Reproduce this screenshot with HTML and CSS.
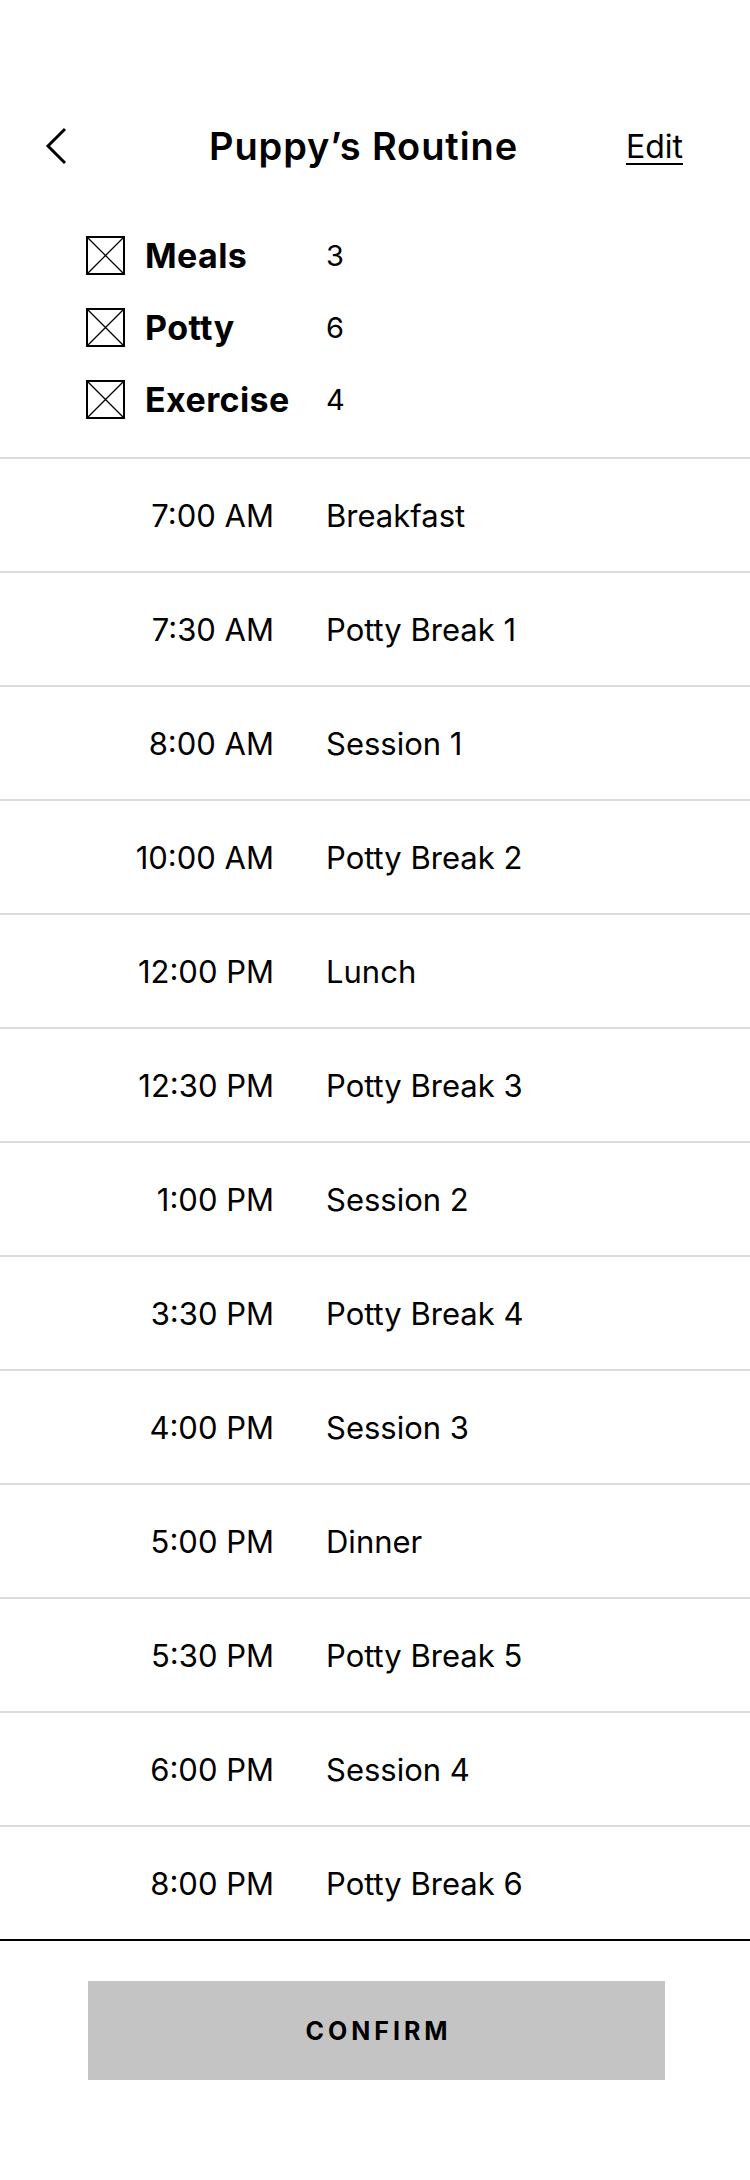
FILE: index.html
```html
<!DOCTYPE html>
<html lang="en">
<head>
<meta charset="utf-8">
<title>Puppy's Routine</title>
<link rel="stylesheet" href="styles.css">
</head>
<body>
<div class="screen">
  <header class="topbar">
    <button class="back" aria-label="Back">
      <svg width="24" height="40" viewBox="0 0 24 40"><path d="M21 3 L4 20 L21 37" fill="none" stroke="#000" stroke-width="3"/></svg>
    </button>
    <h1 class="title">Puppy’s Routine</h1>
    <a class="edit" href="#">Edit</a>
  </header>

  <section class="cats">
    <div class="cat">
      <span class="box"><svg viewBox="0 0 39 39" width="39" height="39"><rect x="1" y="1" width="37" height="37" fill="none" stroke="#000" stroke-width="2"/><path d="M2 2 L37 37 M37 2 L2 37" stroke="#000" stroke-width="1.3"/></svg></span>
      <span class="cat-name">Meals</span>
      <span class="cat-num">3</span>
    </div>
    <div class="cat">
      <span class="box"><svg viewBox="0 0 39 39" width="39" height="39"><rect x="1" y="1" width="37" height="37" fill="none" stroke="#000" stroke-width="2"/><path d="M2 2 L37 37 M37 2 L2 37" stroke="#000" stroke-width="1.3"/></svg></span>
      <span class="cat-name">Potty</span>
      <span class="cat-num">6</span>
    </div>
    <div class="cat">
      <span class="box"><svg viewBox="0 0 39 39" width="39" height="39"><rect x="1" y="1" width="37" height="37" fill="none" stroke="#000" stroke-width="2"/><path d="M2 2 L37 37 M37 2 L2 37" stroke="#000" stroke-width="1.3"/></svg></span>
      <span class="cat-name">Exercise</span>
      <span class="cat-num">4</span>
    </div>
  </section>

  <ul class="schedule">
    <li class="item"><span class="time">7:00 AM</span><span class="what">Breakfast</span></li>
    <li class="item"><span class="time">7:30 AM</span><span class="what">Potty Break 1</span></li>
    <li class="item"><span class="time">8:00 AM</span><span class="what">Session 1</span></li>
    <li class="item"><span class="time">10:00 AM</span><span class="what">Potty Break 2</span></li>
    <li class="item"><span class="time">12:00 PM</span><span class="what">Lunch</span></li>
    <li class="item"><span class="time">12:30 PM</span><span class="what">Potty Break 3</span></li>
    <li class="item"><span class="time">1:00 PM</span><span class="what">Session 2</span></li>
    <li class="item"><span class="time">3:30 PM</span><span class="what">Potty Break 4</span></li>
    <li class="item"><span class="time">4:00 PM</span><span class="what">Session 3</span></li>
    <li class="item"><span class="time">5:00 PM</span><span class="what">Dinner</span></li>
    <li class="item"><span class="time">5:30 PM</span><span class="what">Potty Break 5</span></li>
    <li class="item"><span class="time">6:00 PM</span><span class="what">Session 4</span></li>
    <li class="item last"><span class="time">8:00 PM</span><span class="what">Potty Break 6</span></li>
  </ul>

  <div class="actions">
    <button class="confirm">CONFIRM</button>
  </div>
</div>
</body>
</html>
```

FILE: styles.css
```css
* { box-sizing: border-box; }
html, body { margin: 0; padding: 0; background: #fff; }
body {
  font-family: "Inter", "DejaVu Sans", sans-serif;
  color: #000;
  width: 750px;
}
.screen { width: 750px; padding-top: 110px; }

.topbar {
  display: grid;
  grid-template-columns: 1fr auto 1fr;
  align-items: center;
  height: 72px;
  padding: 0 67px 0 44px;
}
.back {
  justify-self: start;
  background: none;
  border: 0;
  padding: 0;
  width: 24px;
  height: 40px;
  display: flex;
}
.title {
  margin: 0;
  font-size: 38px;
  font-weight: 600;
  letter-spacing: 0.9px;
}
.edit {
  justify-self: end;
  color: #000;
  font-size: 32px;
  font-weight: 400;
  text-decoration: underline;
  text-decoration-thickness: 2px;
  text-underline-offset: 5px;
}

.cats {
  margin-top: 37px;
  padding: 0 0 22px 86px;
}
.cat {
  display: grid;
  grid-template-columns: 39px 201px auto;
  align-items: center;
  height: 72px;
}
.box { display: flex; width: 39px; height: 39px; }
.cat-name {
  padding-left: 20px;
  font-size: 34px;
  font-weight: 700;
  letter-spacing: 0.4px;
}
.cat-num {
  font-size: 29px;
  font-weight: 400;
}

.schedule {
  list-style: none;
  margin: 0;
  padding: 0;
}
.item {
  display: grid;
  grid-template-columns: 274px auto;
  column-gap: 52px;
  align-items: center;
  height: 114px;
  border-top: 2px solid #dcdcdc;
  font-size: 31px;
  font-weight: 400;
}
.item.last { border-bottom: 2px solid #000; height: 116px; }
.time { text-align: right; }

.actions {
  padding: 40px 85px 0 88px;
}
.confirm {
  display: block;
  width: 577px;
  height: 99px;
  background: #c4c4c4;
  border: 0;
  font-family: "Inter", sans-serif;
  font-size: 25px;
  font-weight: 700;
  letter-spacing: 4px;
  color: #000;
  padding: 0 0 0 4px;
}
```
